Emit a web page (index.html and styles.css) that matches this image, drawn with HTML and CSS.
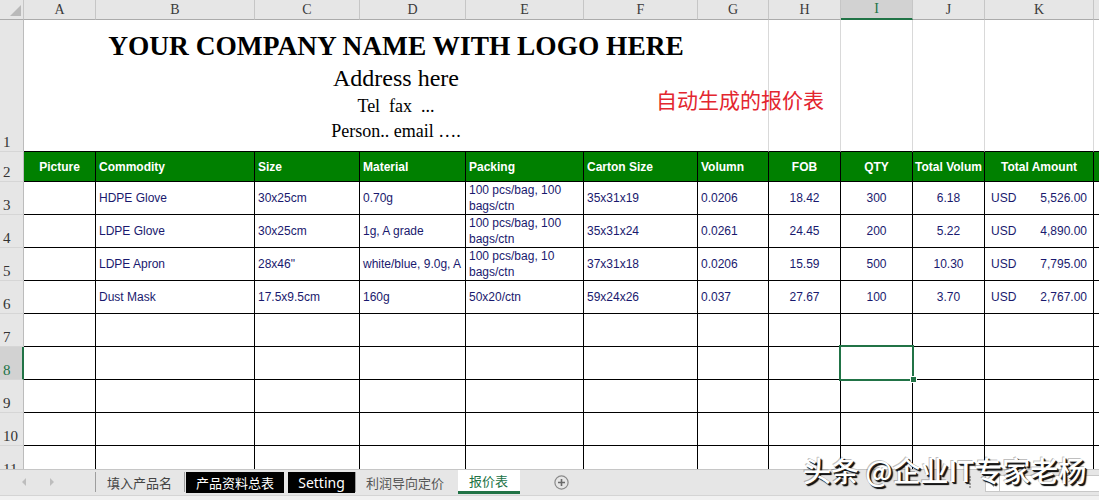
FILE: index.html
```html
<!DOCTYPE html>
<html lang="zh">
<head>
<meta charset="utf-8">
<title>报价表</title>
<link rel="stylesheet" href="styles.css">
</head>
<body>
<div class="sheet">
  <div class="grid">
    <!-- column headers -->
    <div class="corner"><span class="tri"></span></div>
    <div class="ch">A</div><div class="ch">B</div><div class="ch">C</div><div class="ch">D</div>
    <div class="ch">E</div><div class="ch">F</div><div class="ch">G</div><div class="ch">H</div>
    <div class="ch sel">I</div><div class="ch">J</div><div class="ch">K</div><div class="ch"></div>

    <!-- row 1 -->
    <div class="rh">1</div>
    <div class="title-cell">
      <div class="t-name">YOUR COMPANY NAME WITH LOGO HERE</div>
      <div class="t-addr">Address here</div>
      <div class="t-tel">Tel&nbsp; fax&nbsp; ...</div>
      <div class="t-person">Person.. email ….</div>
    </div>
    <div class="g1"></div><div class="g1"></div><div class="g1"></div><div class="g1"></div><div class="g1 last"></div>

    <!-- row 2 -->
    <div class="rh">2</div>
    <div class="hd ctr">Picture</div>
    <div class="hd">Commodity</div>
    <div class="hd">Size</div>
    <div class="hd">Material</div>
    <div class="hd">Packing</div>
    <div class="hd">Carton Size</div>
    <div class="hd">Volumn</div>
    <div class="hd ctr">FOB</div>
    <div class="hd ctr">QTY</div>
    <div class="hd ctr">Total Volum</div>
    <div class="hd ctr">Total Amount</div>
    <div class="hd"></div>

    <!-- row 3 -->
    <div class="rh">3</div>
    <div class="c"></div>
    <div class="c">HDPE Glove</div>
    <div class="c">30x25cm</div>
    <div class="c">0.70g</div>
    <div class="c wrap">100 pcs/bag, 100 bags/ctn</div>
    <div class="c">35x31x19</div>
    <div class="c">0.0206</div>
    <div class="c ctr">18.42</div>
    <div class="c ctr">300</div>
    <div class="c ctr">6.18</div>
    <div class="c amt"><span>USD</span><span>5,526.00</span></div>
    <div class="c"></div>

    <!-- row 4 -->
    <div class="rh">4</div>
    <div class="c"></div>
    <div class="c">LDPE Glove</div>
    <div class="c">30x25cm</div>
    <div class="c">1g, A grade</div>
    <div class="c wrap">100 pcs/bag, 100 bags/ctn</div>
    <div class="c">35x31x24</div>
    <div class="c">0.0261</div>
    <div class="c ctr">24.45</div>
    <div class="c ctr">200</div>
    <div class="c ctr">5.22</div>
    <div class="c amt"><span>USD</span><span>4,890.00</span></div>
    <div class="c"></div>

    <!-- row 5 -->
    <div class="rh">5</div>
    <div class="c"></div>
    <div class="c">LDPE Apron</div>
    <div class="c">28x46"</div>
    <div class="c">white/blue, 9.0g, A</div>
    <div class="c wrap">100 pcs/bag, 10 bags/ctn</div>
    <div class="c">37x31x18</div>
    <div class="c">0.0206</div>
    <div class="c ctr">15.59</div>
    <div class="c ctr">500</div>
    <div class="c ctr">10.30</div>
    <div class="c amt"><span>USD</span><span>7,795.00</span></div>
    <div class="c"></div>

    <!-- row 6 -->
    <div class="rh">6</div>
    <div class="c"></div>
    <div class="c">Dust Mask</div>
    <div class="c">17.5x9.5cm</div>
    <div class="c">160g</div>
    <div class="c">50x20/ctn</div>
    <div class="c">59x24x26</div>
    <div class="c">0.037</div>
    <div class="c ctr">27.67</div>
    <div class="c ctr">100</div>
    <div class="c ctr">3.70</div>
    <div class="c amt"><span>USD</span><span>2,767.00</span></div>
    <div class="c"></div>

    <!-- rows 7-11 -->
    <div class="rh">7</div>
    <div class="c"></div><div class="c"></div><div class="c"></div><div class="c"></div><div class="c"></div><div class="c"></div>
    <div class="c"></div><div class="c"></div><div class="c"></div><div class="c"></div><div class="c"></div><div class="c"></div>

    <div class="rh sel">8</div>
    <div class="c"></div><div class="c"></div><div class="c"></div><div class="c"></div><div class="c"></div><div class="c"></div>
    <div class="c"></div><div class="c"></div><div class="c"></div><div class="c"></div><div class="c"></div><div class="c"></div>

    <div class="rh">9</div>
    <div class="c"></div><div class="c"></div><div class="c"></div><div class="c"></div><div class="c"></div><div class="c"></div>
    <div class="c"></div><div class="c"></div><div class="c"></div><div class="c"></div><div class="c"></div><div class="c"></div>

    <div class="rh">10</div>
    <div class="c"></div><div class="c"></div><div class="c"></div><div class="c"></div><div class="c"></div><div class="c"></div>
    <div class="c"></div><div class="c"></div><div class="c"></div><div class="c"></div><div class="c"></div><div class="c"></div>

    <div class="rh">11</div>
    <div class="c"></div><div class="c"></div><div class="c"></div><div class="c"></div><div class="c"></div><div class="c"></div>
    <div class="c"></div><div class="c"></div><div class="c"></div><div class="c"></div><div class="c"></div><div class="c"></div>
  </div>

  <div class="note">自动生成的报价表</div>
  <div class="selbox"></div>
  <div class="handle"></div>
</div>

<div class="tabbar">
  <div class="nav">
    <span class="arr left"></span>
    <span class="arr right"></span>
  </div>
  <div class="sep"></div>
  <div class="tab">填入产品名</div>
  <div class="sep"></div>
  <div class="tab dark first-dark">产品资料总表</div>
  <div class="tab dark setting">Setting</div>
  <div class="sep"></div>
  <div class="tab plain">利润导向定价</div>
  <div class="tab active">报价表</div>
  <div class="add">
    <svg width="15" height="15" viewBox="0 0 15 15"><circle cx="7.5" cy="7.5" r="6.6" fill="none" stroke="#8a8a8a" stroke-width="1.2"/><path d="M7.5 4v7M4 7.5h7" stroke="#6a6a6a" stroke-width="1.6"/></svg>
  </div>
  <div class="hscroll">
    <span class="dots"></span>
    <div class="sbox"><span class="sarr"></span><span class="strack"></span></div>
  </div>
</div>
<div class="status"></div>
<div class="watermark">头条 @企业IT专家老杨</div>
</body>
</html>
```
FILE: styles.css
```css
* { box-sizing: border-box; margin: 0; padding: 0; }
html, body { height: 500px; overflow: hidden; }
body {
  width: 1099px;
  background: #ffffff;
  font-family: "Liberation Sans", Arial, sans-serif;
  display: flex;
  flex-direction: column;
  position: relative;
}

.sheet { position: relative; height: 469px; overflow: hidden; flex: none; }

.grid {
  display: grid;
  grid-template-columns: 24px 72px 159px 105px 106px 118px 114px 71px 72px 72px 72px 109px 1fr;
  grid-template-rows: 20px 132px 30px repeat(9, 33px);
}

/* headers */
.corner {
  background: #e6e6e6;
  border-right: 1px solid #c6c6c6;
  border-bottom: 1px solid #ababab;
  display: flex;
  align-items: flex-end;
  justify-content: flex-end;
  padding: 0 2px 3px 0;
}
.tri {
  width: 0; height: 0;
  border-left: 11px solid transparent;
  border-bottom: 11px solid #b9b9b9;
}
.ch {
  background: #e6e6e6;
  border-right: 1px solid #c6c6c6;
  border-bottom: 1px solid #ababab;
  font-family: "Liberation Serif", serif;
  font-size: 14px;
  color: #3a3a3a;
  display: flex;
  align-items: center;
  justify-content: center;
}
.ch.sel { background: #d2d2d2; border-bottom: 2px solid #217346; color: #217346; }

.rh {
  background: #e6e6e6;
  border-right: 1px solid #bcbcbc;
  border-bottom: 1px solid #d6d6d6;
  font-family: "Liberation Serif", serif;
  font-size: 15px;
  line-height: 16px;
  color: #333;
  display: flex;
  align-items: flex-end;
  padding: 0 0 1px 3px;
}
.rh.sel { background: #d2d2d2; color: #217346; border-right: 2px solid #217346; }

/* row 1 */
.title-cell {
  grid-column: span 7;
  border-right: 1px solid #d9d9d9;
  border-bottom: 1px solid #000;
  text-align: center;
  font-family: "Liberation Serif", "Times New Roman", serif;
  color: #000;
  padding-top: 10px;
  white-space: nowrap;
}
.t-name { font-size: 27.4px; font-weight: bold; line-height: 32px; }
.t-addr { font-size: 24px; line-height: 32px; }
.t-tel { font-size: 18px; line-height: 24px; }
.t-person { font-size: 18px; line-height: 26px; }

.g1 { border-right: 1px solid #d9d9d9; border-bottom: 1px solid #000; }
.g1.last { border-right: none; }

/* table */
.hd {
  background: #008000;
  color: #ffffff;
  font-weight: bold;
  font-size: 12px;
  border-right: 1px solid #000;
  border-bottom: 1px solid #000;
  display: flex;
  align-items: center;
  padding-left: 3px;
  white-space: nowrap;
  overflow: hidden;
}
.hd.ctr { justify-content: center; padding: 0; }

.c {
  border-right: 1px solid #000;
  border-bottom: 1px solid #000;
  font-size: 12px;
  color: #19196e;
  display: flex;
  align-items: center;
  padding: 0 3px;
  white-space: nowrap;
  overflow: hidden;
}
.c.ctr { justify-content: center; padding: 0; }
.c.wrap { white-space: normal; line-height: 16px; align-items: flex-start; padding-top: 0; }
.c.amt { justify-content: space-between; padding: 0 6px; }

/* overlays */
.note {
  position: absolute;
  left: 656px;
  top: 87px;
  font-family: "Noto Sans CJK SC", sans-serif;
  font-size: 21px;
  line-height: 24px;
  color: #e3262f;
  white-space: nowrap;
}
.selbox {
  position: absolute;
  left: 839px; top: 345px;
  width: 75px; height: 36px;
  border: 2px solid #217346;
}
.handle {
  position: absolute;
  left: 910px; top: 376px;
  width: 7px; height: 7px;
  background: #217346;
  border: 1px solid #ffffff;
}

/* sheet tabs */
.tabbar {
  height: 26px;
  flex: none;
  background: #e6e6e6;
  border-top: 1px solid #c6c6c6;
  display: flex;
  align-items: flex-start;
  font-family: "Noto Sans CJK SC", sans-serif;
  font-size: 13px;
}
.nav { width: 95px; height: 24px; display: flex; align-items: center; padding-left: 22px; gap: 24px; }
.arr { width: 0; height: 0; border-top: 4px solid transparent; border-bottom: 4px solid transparent; }
.arr.left { border-right: 4px solid #bdbdbd; }
.arr.right { border-left: 4px solid #bdbdbd; }
.sep { width: 1px; height: 20px; margin-top: 2px; background: #9e9e9e; }
.tab {
  height: 21px;
  margin-top: 2px;
  line-height: 21px;
  padding: 0 12px 0 11px;
  color: #444;
  white-space: nowrap;
}
.tab.dark { background: #000; color: #fff; }
.tab.first-dark { margin-left: 1px; width: 98px; padding: 0; text-align: center; }
.tab.setting { margin-left: 4px; width: 67px; padding: 0; text-align: center; font-family: "Noto Sans", sans-serif; font-size: 14px; }
.tab.plain { width: 102px; padding: 0 0 0 10px; color: #555; }
.tab.active {
  height: 24px;
  margin-top: 0;
  line-height: 22px;
  background: #ffffff;
  color: #217346;
  width: 62px;
  padding: 0 0 0 11px;
  border-bottom: 3px solid #217346;
}
.add { margin-left: 34px; margin-top: 5px; height: 15px; }
.hscroll { margin-left: auto; display: flex; align-items: center; height: 24px; }
.dots { width: 0; height: 12px; border-left: 2px dotted #a0a0a0; margin-right: 14px; }
.sbox {
  width: 114px; height: 17px; margin-top: 2px;
  background: #ffffff;
  border: 1px solid #c8c8c8;
  border-right: none;
  display: flex;
  align-items: center;
}
.sarr {
  width: 0; height: 0; margin: 0 5px 0 4px;
  border-top: 4px solid transparent; border-bottom: 4px solid transparent;
  border-right: 4px solid #777;
}
.strack { height: 100%; border-left: 1px solid #c8c8c8; flex: 1; }
.status { height: 5px; flex: none; background: #f1f1f1; border-top: 1px solid #d4d4d4; }

.watermark {
  position: absolute;
  left: 803px;
  top: 456px;
  font-family: "Noto Sans CJK SC", sans-serif;
  font-size: 28px;
  line-height: 28px;
  font-weight: 500;
  color: #ffffff;
  white-space: nowrap;
  text-shadow: 1px 1px 0 #222, 2px 2px 1px #000, -1px -1px 0 rgba(0,0,0,0.25);
}
```
